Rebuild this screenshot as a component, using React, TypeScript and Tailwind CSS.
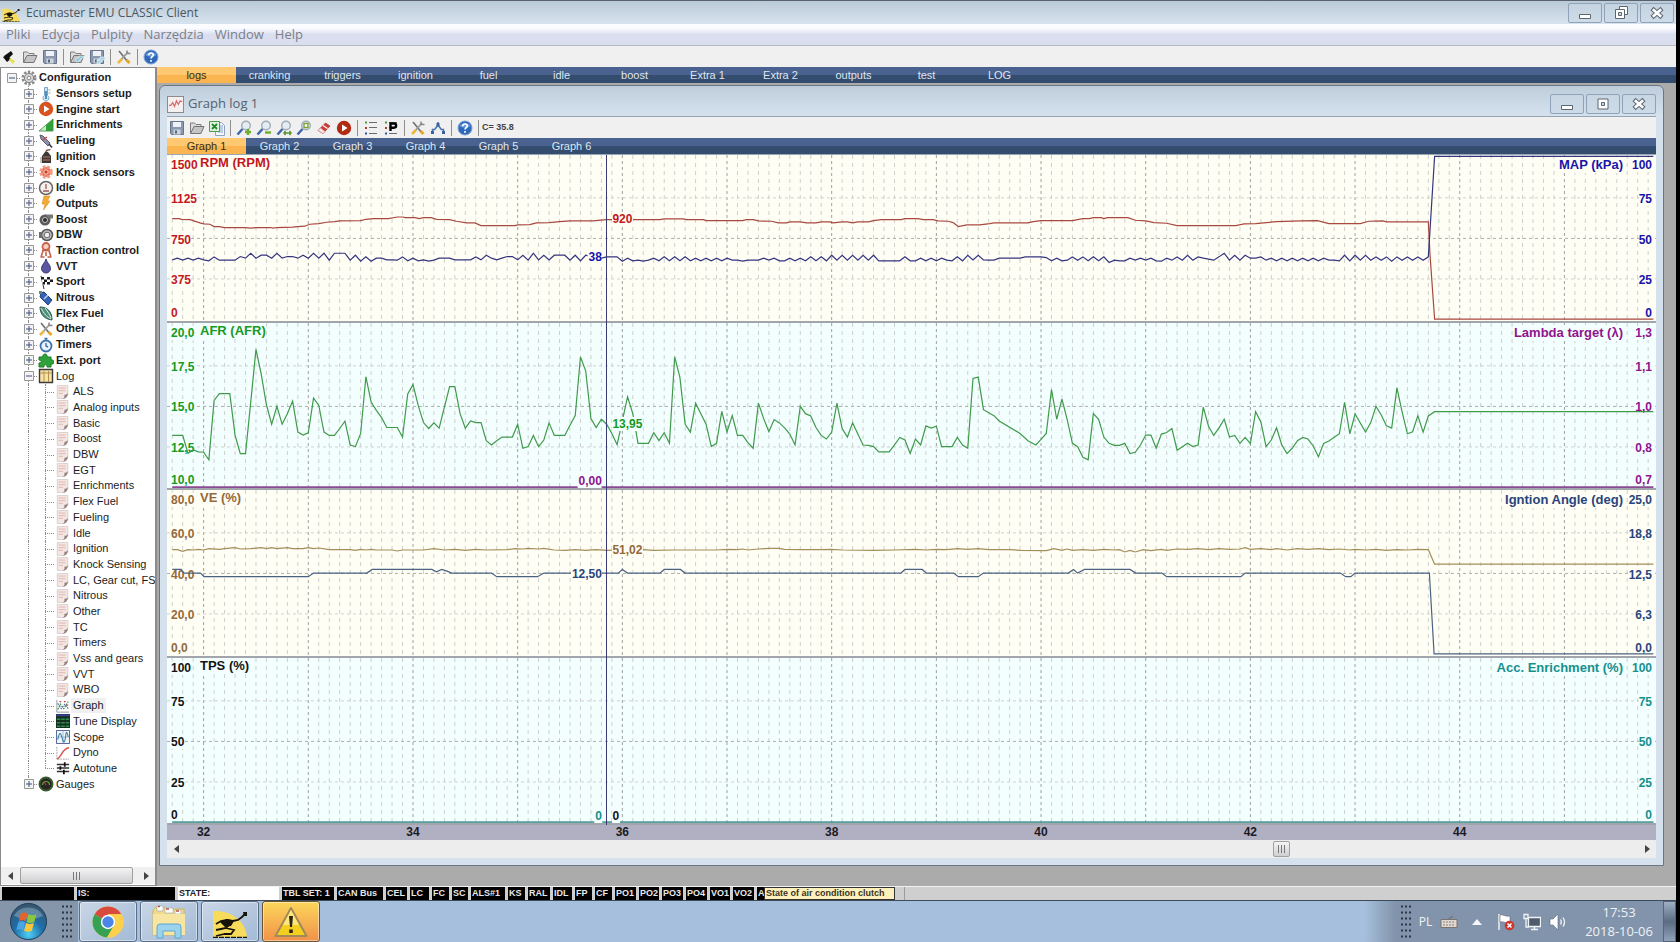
import type { ReactNode } from "react";
import clsx from "clsx";

/* ---------- icons ---------- */

type IconProps = { className?: string; children?: ReactNode };

const Svg = ({ className = "size-4", children }: IconProps) => (
  <svg viewBox="0 0 16 16" className={clsx("shrink-0", className)} fill="none" aria-hidden="true">
    {children}
  </svg>
);

const Runner = ({ className }: IconProps) => (
  <svg viewBox="0 0 36 28" className={clsx("shrink-0", className)} fill="none" aria-hidden="true">
    <path d="M1 1c16-1 32 8 34 26H1z" fill="#f7dc5c" />
    <path d="M1 27.500h34" stroke="#15130a" strokeWidth="1.500" strokeDasharray="5 1" />
    <path d="m4 14 5-3 6-1 6 1 5-1 4-3 3-3M20 12l-6 6-5 1M14 18l8 2-3 4h-7M9 19l-5 1M12 24l-8 2" stroke="#15130a" strokeWidth="1.800" />
    <path d="m8 12 7-3 7 2-3 5-6 1zM31 2h4v4h-3z" fill="#15130a" />
  </svg>
);

const Folder = ({ blue }: { blue?: boolean }) => (
  <Svg>
    <path d="M1.500 13V3h4l1.500 1.500h5V6" fill="#dcdcdc" stroke="#7d7d7d" />
    <path d="M1.500 13.500 5 6.500h10l-3 7z" fill="#c4c4c4" stroke="#757575" />
    {blue && <path d="M7 13V9h3V7h5v2h-3v2h-2v2z" fill="#8fc6dd" stroke="#fff" strokeWidth=".5" />}
  </Svg>
);

const Floppy = ({ blue }: { blue?: boolean }) => (
  <Svg>
    <path d="M1.500 1.500h13v13h-12l-1-1z" fill="#8a98b0" stroke="#66758e" />
    <path d="M4 2h8v5H4z" fill="#eef1f5" />
    <path d="M4.500 9.500h7v5h-7z" fill="#cfd5de" />
    <path d="M6 10.500h2v3H6z" fill="#56647c" />
    {blue && <path d="M8 15v-4h3V8h5v3h-3v2h-2v2z" fill="#9fd3e6" stroke="#fff" strokeWidth=".6" />}
  </Svg>
);

const Flashlight = () => (
  <Svg>
    <path d="m2 7 7-5 2 3-6 6z" fill="#111" />
    <path d="m1 8 4-2 4 4-4 3z" fill="#111" />
    <path d="m8 9 5 3-2 3-4-4z" fill="#e8e04e" />
  </Svg>
);

const Tools = () => (
  <Svg>
    <path d="m3 2 9 11" stroke="#6f6f6f" strokeWidth="1.600" />
    <path d="m10.500 11 3 3" stroke="#e6a928" strokeWidth="3" />
    <path d="M12 3 4 12" stroke="#9b9b9b" strokeWidth="1.800" />
    <path d="m6 10-4 4" stroke="#edb83b" strokeWidth="2.600" />
    <path d="M11 1.500v3h3.500" stroke="#8a8a8a" strokeWidth="1.500" />
  </Svg>
);

const Help = () => (
  <Svg>
    <circle cx="8" cy="8" r="7" fill="#2f68b8" stroke="#7ba1d6" />
    <path d="M2.500 6a6 4.500 0 0 1 11 0c-3 2-8 2-11 0" fill="#6c9bdb" />
    <path d="M5.800 6.200c0-3 4.500-2.800 4.500-.2 0 1.600-2.200 1.500-2.200 3.400M8 11v1.700" stroke="#fff" strokeWidth="1.700" />
  </Svg>
);

const Excel = () => (
  <Svg>
    <path d="M6.500 2.500h6l3 3v10h-9z" fill="#f5f8fb" stroke="#8fa3bd" />
    <path d="M9 6h5M9 8h5M9 10h5M9 12h5" stroke="#7fa7cf" />
    <path d="M.5 1.500h10v10H.5z" fill="#e2f2df" stroke="#4d9a4b" />
    <path d="m3 4 5 5M8 4 3 9" stroke="#1f8a2b" strokeWidth="1.800" />
  </Svg>
);

const Magnifier = ({ mark }: { mark: string }) => (
  <Svg>
    <circle cx="10" cy="5.500" r="4.300" fill="#e4edf3" stroke="#a0adb8" strokeWidth="1.400" />
    <path d="m6.500 9-5 5.500" stroke="#3d64a8" strokeWidth="2.400" />
    {mark === "in" && <path d="M12 9v6M9 12h6" stroke="#6fae2a" strokeWidth="2.400" />}
    {mark === "out" && <path d="M9 12.500h6" stroke="#6fae2a" strokeWidth="2.400" />}
    {mark === "fit" && <path d="M8 13h7M9.500 11 8 13l1.500 2M13.500 11l1.500 2-1.500 2" stroke="#5a8f30" strokeWidth="1.400" />}
    {mark === "box" && <path d="M8 3.500h4v4H8z" fill="#fff" stroke="#7fa33a" strokeWidth="1.400" />}
  </Svg>
);

const Eraser = () => (
  <Svg>
    <path d="M2 10.500 9.500 3l4.500 3-7 7.500z" fill="#cf3a36" stroke="#9d2320" strokeWidth=".6" />
    <path d="m2 10.500 2.500-2.500 4.500 3.400L7 13.500z" fill="#f6e6e4" stroke="#c99" strokeWidth=".5" />
    <path d="m7 5.500 4.500 3" stroke="#fff" strokeWidth="1.400" />
  </Svg>
);

const Play = ({ color = "#b32a12" }: { color?: string }) => (
  <Svg>
    <circle cx="8" cy="8" r="7.200" fill={color} />
    <path d="M6 4.500 11.500 8 6 11.500z" fill="#fff" />
  </Svg>
);

const ListIcon = ({ p }: { p?: boolean }) => (
  <Svg>
    <path d="M2 2.500h2" stroke="#4f9a3d" strokeWidth="2" />
    <path d="M2 8h2" stroke="#b03a3a" strokeWidth="2" />
    <path d="M2 13.500h2" stroke="#3a4fa8" strokeWidth="2" />
    <path d="M6 2.500h8M6 7.500h8M6 13.500h8" stroke="#6b6b6b" />
    {p && <path d="M7.500 11V3.500H11a2 2 0 0 1 0 4.200H8" stroke="#000" strokeWidth="2.400" />}
  </Svg>
);

const Compass = () => (
  <Svg>
    <path d="M2.500 14V9.500h2.200L8 5l3.300 4.500h2.200V14M8 5V2" stroke="#4672b0" strokeWidth="1.500" />
    <path d="M6.500 3h3v3h-3zM1 11h3v3H1zM12 11h3v3h-3z" fill="#3a62a0" />
  </Svg>
);

const Page = () => (
  <Svg className="size-[14px]">
    <path d="M1.500.5h12v11l-3.500 4H1.500z" fill="#f3e7e4" stroke="#d6cbc8" />
    <path d="M3 3.500h8M3 6.500h8M3 9.500h5" stroke="#dfb0ab" />
    <path d="M13.500 9c0 4-2 6.500-6 6.500 2-1 2.500-2 2-4.500 1.500.5 3-.5 4-2z" fill="#94817f" />
  </Svg>
);

const GraphIcon = () => (
  <Svg className="size-[14px]">
    <path d="M1 1v14h14" stroke="#8b8b9b" />
    <path d="m2 12 3-6 4 5 5-8" stroke="#3f9a4c" strokeWidth="1.400" strokeDasharray="2 1" />
    <path d="m2 5 4 6 4-5 4 5" stroke="#4860a8" strokeWidth="1.200" strokeDasharray="2 1" />
    <path d="M4 3h2M9 3h2M12 7h2" stroke="#d03c3c" strokeWidth="1.500" />
  </Svg>
);

const TuneIcon = () => (
  <Svg className="size-[14px]">
    <path d="M0 0h16v16H0z" fill="#14301f" />
    <path d="M0 1.500h16" stroke="#3f3f9c" strokeWidth="2" />
    <path d="M1 6h14M1 10h14M1 14h14" stroke="#2f8a4c" strokeWidth="1.600" strokeDasharray="4 1" />
  </Svg>
);

const ScopeIcon = () => (
  <Svg className="size-[14px]">
    <path d="M.5.5h15v15H.5z" fill="#f2f6fb" stroke="#3d4b86" />
    <path d="M8 1v14M1 8h14" stroke="#9fb2cc" />
    <path d="M2 11c2-9 3-9 5-2s3 6 4-2 2-3 3 1" stroke="#2f7fa3" strokeWidth="1.200" />
  </Svg>
);

const DynoIcon = () => (
  <Svg className="size-[14px]">
    <path d="M1 1v14h14" stroke="#999" strokeDasharray="2 1" />
    <path d="M1 15C7 13 6 3 15 2" stroke="#d9534a" strokeWidth="1.600" />
  </Svg>
);

const Sliders = () => (
  <Svg className="size-[14px]">
    <path d="M1 4h14M1 8h14M1 12h14" stroke="#333" strokeWidth="1.500" />
    <path d="M10 1.500v5M5 6v4M9 10v5" stroke="#111" strokeWidth="2" />
  </Svg>
);

const treeIcons: Record<string, ReactNode> = {
  gear: (
    <Svg>
      <circle cx="8" cy="8" r="6.200" stroke="#8b8b8b" strokeWidth="2.600" strokeDasharray="2.400 1.500" />
      <circle cx="8" cy="8" r="4.600" fill="#d6d6d6" stroke="#7f7f7f" />
      <circle cx="8" cy="8" r="1.800" fill="#fff" stroke="#888" />
    </Svg>
  ),
  thermo: (
    <Svg>
      <path d="M6.500 1.500h3v8a3 3 0 1 1-3 0z" fill="#cfe5f3" stroke="#7aa6c4" />
      <path d="M8 5v8" stroke="#3e86bf" strokeWidth="1.800" />
      <path d="M10.500 4h2M10.500 7h2" stroke="#8aa" />
    </Svg>
  ),
  start: <Play color="#d9531e" />,
  ramp: (
    <Svg>
      <path d="M1 14 15 2v12z" fill="#c9ecc9" stroke="#5a9a5a" />
      <path d="M8 8.500 15 2v12H8z" fill="#2fa03a" />
    </Svg>
  ),
  injector: (
    <Svg>
      <path d="m2 2 3 1 7 7-2 3-7-7z" fill="#8f8fa6" stroke="#5a5a72" />
      <path d="m5 7 4-3" stroke="#c44" strokeWidth="1.500" />
      <path d="m11 11 3 3.500" stroke="#444" strokeWidth="1.800" />
    </Svg>
  ),
  coil: (
    <Svg>
      <path d="M4 15V8l3-4h3l3 4v7z" fill="#3e3734" />
      <path d="M5 9h7M5 12h7" stroke="#b9776a" />
      <path d="M8 4c0-3 4-1 4-3" stroke="#7a5a50" strokeWidth="1.500" />
      <path d="M2 9h2v6H2z" fill="#c9c4c0" />
    </Svg>
  ),
  knock: (
    <Svg>
      <circle cx="8" cy="8" r="5" fill="#e8664a" stroke="#f09a80" strokeWidth="3.500" strokeDasharray="2.500 1.500" />
      <circle cx="8" cy="8" r="2.200" stroke="#ffd9cc" fill="#c83e2c" />
    </Svg>
  ),
  dial: (
    <Svg>
      <circle cx="8" cy="8" r="6.500" fill="#f3f0ef" stroke="#6b6666" strokeWidth="1.500" />
      <path d="M8 4v5M5 11h6" stroke="#9a5a5a" strokeWidth="1.300" />
    </Svg>
  ),
  bolt: (
    <Svg>
      <path d="M6 1h6L9.500 6H12l-6.500 9L7 9H4z" fill="#f2ac32" stroke="#d98f2a" strokeWidth=".6" />
    </Svg>
  ),
  turbo: (
    <Svg>
      <circle cx="7" cy="9" r="5.500" fill="#5b5b5b" />
      <path d="M7 3.500h8v4h-4z" fill="#777" />
      <circle cx="7" cy="9" r="2.500" fill="#2c2c2c" stroke="#c5c5c5" />
    </Svg>
  ),
  throttle: (
    <Svg>
      <circle cx="9" cy="8" r="5.500" fill="#bdbdbd" stroke="#555" strokeWidth="1.500" />
      <circle cx="9" cy="8" r="2.800" fill="#efefef" stroke="#666" />
      <path d="M1 5h3v6H1z" fill="#6d6d6d" />
    </Svg>
  ),
  traction: (
    <Svg>
      <circle cx="8" cy="4.500" r="3.500" stroke="#c8614b" strokeWidth="1.800" fill="#f3cfc4" />
      <path d="M4 8c3 1 5 1 8 0M5 9l-2 6M11 9l2 6M8 10v4M2.500 15h4M9.500 15h4" stroke="#c8614b" strokeWidth="1.600" />
    </Svg>
  ),
  drop: (
    <Svg>
      <path d="M8 1c1 4 4.500 6 4.500 9.500a4.500 4.500 0 0 1-9 0C3.500 7 7 5 8 1z" fill="#5a56a0" stroke="#3c3a78" />
    </Svg>
  ),
  flag: (
    <Svg>
      <path d="m3 2 3 13" stroke="#333" />
      <path d="M3 3h11v8H5z" fill="#fff" />
      <path d="M3 3h3v2.500H3zM9 3h3v2.500H9zM6 5.500h3V8H6zM12 5.500h3V8h-3zM5 8h2v2.500H5zM9 8h3v2.500H9z" fill="#1c1c1c" />
    </Svg>
  ),
  bottle: (
    <Svg>
      <path d="m3 3 3-1 8 8-4 5-8-8z" fill="#3563b3" stroke="#23407a" />
      <path d="m6 9 4-4" stroke="#b9cdf0" strokeWidth="1.600" />
      <path d="M1 1h3v3H1z" fill="#5c8a7a" />
    </Svg>
  ),
  leaf: (
    <Svg>
      <path d="M2 2c7 0 12 4 12 13C6 14 2 9 2 2z" fill="#4f8f7c" stroke="#2c5a4e" />
      <path d="M3 3c3 6 6 9 10 11M7 3c3 4 5 7 6 10" stroke="#d7ece4" />
    </Svg>
  ),
  tools: <Tools />,
  timer: (
    <Svg>
      <circle cx="8" cy="9" r="5.500" fill="#eaf3fb" stroke="#3f72ad" strokeWidth="1.800" />
      <path d="M6.500 1.500h3M8 2v2M8 6v3l2 1" stroke="#3f72ad" strokeWidth="1.400" />
    </Svg>
  ),
  puzzle: (
    <Svg>
      <path d="M1 5h4c-1-4 5-4 4 0h4v3c4-1 4 5 0 4v3H9c1-3-4-3-3 0H1v-4c3 0 3-3 0-3z" fill="#2fa23a" stroke="#1d7a28" />
    </Svg>
  ),
  table: (
    <Svg>
      <path d="M1.500 1.500h13v13h-13z" fill="#f8e3a3" stroke="#3b3b3b" strokeWidth="1.400" />
      <path d="M6 3v11M10.500 3v11M2 5h12" stroke="#b08f55" />
    </Svg>
  ),
  gauge: (
    <Svg>
      <circle cx="8" cy="8" r="6.500" fill="#2c2424" stroke="#385a30" strokeWidth="2" />
      <path d="M4.500 9a3.500 3.500 0 0 1 7 0" stroke="#4fae3d" strokeWidth="1.200" />
      <path d="M8 9 6 6" stroke="#c44" />
    </Svg>
  ),
  page: <Page />,
  graph: <GraphIcon />,
  tune: <TuneIcon />,
  scope: <ScopeIcon />,
  dyno: <DynoIcon />,
  sliders: <Sliders />,
};

/* ---------- tree ---------- */

type TreeItem = { label: string; icon: string; level: 0 | 1 | 2; mark?: "+" | "-"; selected?: boolean };

const sections: [string, string][] = [
  ["Sensors setup", "thermo"],
  ["Engine start", "start"],
  ["Enrichments", "ramp"],
  ["Fueling", "injector"],
  ["Ignition", "coil"],
  ["Knock sensors", "knock"],
  ["Idle", "dial"],
  ["Outputs", "bolt"],
  ["Boost", "turbo"],
  ["DBW", "throttle"],
  ["Traction control", "traction"],
  ["VVT", "drop"],
  ["Sport", "flag"],
  ["Nitrous", "bottle"],
  ["Flex Fuel", "leaf"],
  ["Other", "tools"],
  ["Timers", "timer"],
  ["Ext. port", "puzzle"],
];

const logPages = [
  "ALS", "Analog inputs", "Basic", "Boost", "DBW", "EGT", "Enrichments", "Flex Fuel", "Fueling", "Idle",
  "Ignition", "Knock Sensing", "LC, Gear cut, FS", "Nitrous", "Other", "TC", "Timers", "Vss and gears", "VVT", "WBO",
];

const tree: TreeItem[] = [
  { label: "Configuration", icon: "gear", level: 0, mark: "-" },
  ...sections.map(([label, icon]): TreeItem => ({ label, icon, level: 1, mark: "+" })),
  { label: "Log", icon: "table", level: 1, mark: "-" },
  ...logPages.map((label): TreeItem => ({ label, icon: "page", level: 2 })),
  { label: "Graph", icon: "graph", level: 2, selected: true },
  { label: "Tune Display", icon: "tune", level: 2 },
  { label: "Scope", icon: "scope", level: 2 },
  { label: "Dyno", icon: "dyno", level: 2 },
  { label: "Autotune", icon: "sliders", level: 2 },
  { label: "Gauges", icon: "gauge", level: 1, mark: "+" },
];

const TreeCell = ({ line, stub, mark }: { line?: "full" | "half"; stub?: boolean; mark?: "+" | "-" }) => (
  <span className="relative flex h-full w-[17px] shrink-0 items-center justify-center">
    {line && (
      <span
        className={clsx("absolute left-2 top-0 border-l border-dotted border-[#8c8c8c]", line === "full" ? "h-full" : "h-1/2")}
      />
    )}
    {stub && <span className="absolute left-2 top-1/2 w-[9px] border-t border-dotted border-[#8c8c8c]" />}
    {mark && (
      <svg viewBox="0 0 10 10" className="relative size-[10px]" aria-hidden="true">
        <path d="M.5.5h9v9h-9z" fill="#f4f4f4" stroke="#989898" />
        <path d={mark === "+" ? "M2 5h6M5 2v6" : "M2 5h6"} stroke="#3f4f80" />
      </svg>
    )}
  </span>
);

const TreeRow = ({ item, last }: { item: TreeItem; last: boolean }) => {
  const bold = item.level < 2 && item.label !== "Log" && item.label !== "Gauges";
  return (
    <li className="flex min-h-0 items-center whitespace-nowrap pl-[2px]">
      {item.level === 0 && <TreeCell stub mark={item.mark} />}
      {item.level === 1 && (
        <>
          <TreeCell />
          <TreeCell line={item.label === "Gauges" ? "half" : "full"} stub mark={item.mark} />
        </>
      )}
      {item.level === 2 && (
        <>
          <TreeCell />
          <TreeCell line="full" />
          <TreeCell line={last ? "half" : "full"} stub />
        </>
      )}
      <span className="flex w-[17px] shrink-0 items-center justify-center">
        <span className="flex size-[14px] items-center justify-center">{treeIcons[item.icon]}</span>
      </span>
      <span className={clsx("px-[2px] leading-[15px]", bold && "font-bold", item.selected && "bg-[#f0f0f0]")}>
        {item.label}
      </span>
    </li>
  );
};

/* ---------- shared chrome ---------- */

const Separator = () => <span className="mx-[3px] h-4 w-px bg-[#8f8f8f]" />;

const ToolButton = ({ label, children }: { label: string; children: ReactNode }) => (
  <button type="button" aria-label={label} className="flex size-5 items-center justify-center">
    {children}
  </button>
);

const TabStrip = ({ tabs }: { tabs: string[] }) => (
  <nav className="flex h-4 shrink-0 bg-linear-to-b from-[#49628f] from-50% to-[#344c6e] to-50% text-[11px] leading-4 text-[#dfe6f0]">
    {tabs.map((tab, i) => (
      <button
        key={tab}
        type="button"
        className={
          i === 0
            ? "-mr-[3px] w-[79px] bg-linear-to-b from-[#ffc871] from-50% to-[#fbb550] to-50% text-[#3b2c12]"
            : "w-[73px]"
        }
      >
        {tab}
      </button>
    ))}
  </nav>
);

const WindowButtons = ({ restore }: { restore?: boolean }) => {
  const style = "flex h-5 w-[34px] items-center justify-center rounded-[2px] border border-[#8fa2b9] bg-[#c9d7e4]/60";
  return (
    <div className="flex gap-[2px]">
      <button type="button" aria-label="Minimize" className={style}>
        <Svg>
          <path d="M2.500 9.500h11v4h-11z" fill="#fff" stroke="#5c6670" />
        </Svg>
      </button>
      <button type="button" aria-label="Maximize" className={style}>
        <Svg>
          {restore && <path d="M6.500 1.500h8v8h-8z" fill="#fff" stroke="#5c6670" />}
          <path d={restore ? "M2.500 4.500h9v9h-9z" : "M3 3h10v10H3z"} fill="#fff" stroke="#5c6670" />
          <path d={restore ? "M5.500 7.500h3v3h-3z" : "M6.500 6.500h3v3h-3z"} fill="#c9d7e4" stroke="#5c6670" />
        </Svg>
      </button>
      <button type="button" aria-label="Close" className={style}>
        <Svg>
          <path d="m3 3.500 10 9M13 3.500l-10 9" stroke="#5c6670" strokeWidth="4.500" />
          <path d="m3.800 4.200 8.400 7.600M12.200 4.200l-8.400 7.600" stroke="#fff" strokeWidth="2.600" />
        </Svg>
      </button>
    </div>
  );
};

const Arrow = ({ dir, label }: { dir: "left" | "right"; label: string }) => (
  <button type="button" aria-label={label} className="flex h-full w-[18px] shrink-0 items-center justify-center">
    <svg viewBox="0 0 5 8" className="h-2 w-[5px]" aria-hidden="true">
      <path d={dir === "left" ? "M5 0v8L0 4z" : "M0 0v8l5-4z"} fill="#444" />
    </svg>
  </button>
);

const Thumb = ({ className }: { className: string }) => (
  <div
    className={clsx(
      "flex h-full items-center justify-center gap-[2px] rounded-[2px] border border-[#a0a0a0] bg-linear-to-b from-[#f4f4f4] to-[#cfcfd2]",
      className
    )}
  >
    <span className="h-2 w-px bg-[#777]" />
    <span className="h-2 w-px bg-[#777]" />
    <span className="h-2 w-px bg-[#777]" />
  </div>
);

/* ---------- graph ---------- */

// x is the sample number (20 samples per second), y grows downwards, each strip is 502 units high
const FIRST = -1;
const SPAN = 284.5;
const CURSOR = 82.9;

const toPercent = (sample: number) => `${((sample - FIRST) / SPAN) * 100}%`;

const rpm =
  "0,193 1.3,193 1.8,195 3.4,196 5.3,206 6,209 7.2,210 8,217 9,217 10,220 14,220 15,222 16,220 18.7,220 19.3,222 20,220 23,219 24,217 25.3,216 26.3,210 28,208 29.5,204 31,202 32,200 36,199 37,195 38.4,193 41.3,193 43,188 44,188 44.5,190 46.4,190 47.2,193 48,190 49.5,190 50.5,195 53,196 54.3,201 56.2,206 57.8,206 59,214 65.5,214 66,212 68.3,211 69.6,206 72,205 74,202 76,200 80.4,200 82.4,197 83,196 93.2,196 94,194 97.6,194 98.3,196 101.5,196 102,199 109,199 109.7,196 111,196 112,200 114.5,201 115.8,206 117.4,206 118,203 120,203 121.2,206 123,206 124,203 125.6,203 126.3,206 128,203 129,203 130,206 131,203 133,203 134,199 135.5,196 139.3,196 140,193 142.5,193 143.5,196 145.4,196 146.3,200 148.3,201 149.2,205 150.2,217 151.8,212 154.3,212 156.2,208 157,206 163.5,206 164.5,202 166,199 172,199 174,193 175.2,193 176,190 177.5,190 178,193 178.7,190 182.6,190 184,198 186,200 187.6,205 190,207 192,214 203.2,214 204.8,209 207,208 211,202 215.7,200 218.8,199 221,208 227,208 228.6,201 231.3,200 232,203 240,203 240.3,298 241.2,498 283,498";

const mapSamples = [
  360, 355, 361, 355, 361, 355, 360, 363, 351, 361, 361, 361, 361, 350, 355, 340, 355, 346, 346, 355, 340, 355, 350, 350,
  355, 346, 355, 340, 355, 340, 361, 340, 340, 340, 361, 346, 364, 351, 364, 355, 355, 360, 360, 361, 351, 363, 355, 363,
  360, 364, 361, 355, 355, 355, 360, 360, 360, 360, 351, 360, 346, 355, 360, 355, 350, 350, 360, 346, 361, 340, 360, 346,
  360, 346, 346, 346, 361, 346, 363, 346, 350, 350, 355, 351, 351, 351, 364, 355, 363, 361, 364, 361, 355, 363, 351, 363,
  351, 363, 351, 363, 355, 363, 355, 363, 355, 363, 355, 361, 361, 364, 361, 361, 361, 355, 361, 355, 363, 363, 355, 363,
  355, 363, 351, 363, 351, 363, 346, 361, 346, 361, 346, 361, 346, 361, 346, 363, 363, 363, 363, 363, 351, 363, 363, 355,
  363, 355, 363, 355, 361, 363, 351, 363, 346, 360, 346, 360, 361, 361, 355, 355, 355, 355, 355, 351, 351, 351, 351, 353,
  363, 355, 363, 361, 351, 361, 351, 363, 351, 363, 351, 368, 361, 363, 363, 355, 361, 355, 361, 355, 363, 364, 355, 361,
  351, 361, 346, 361, 351, 355, 358, 361, 351, 340, 361, 346, 361, 346, 355, 355, 351, 361, 355, 363, 355, 363, 355, 363,
  355, 363, 355, 363, 355, 361, 361, 363, 346, 363, 346, 361, 346, 361, 351, 361, 351, 364, 351, 361, 351, 361, 351, 361,
  351,
];
const map = `${mapSamples.map((y, i) => `${i},${y - 42}`).join(" ")} 241.2,4 283,4`;

const afr =
  "0,341 2,341 3,395 4,385 5,391 6,392 7,415 8,235 9,214 11,214 12,340 13,396 14,396 15,240 16,80 17,155 18,248 19,307 20,253 21,307 22,275 23,237 24,331 25,340 26,333 27,228 28,250 29,331 30,341 31,341 32,320 33,298 34,370 35,375 36,335 37,163 38,240 39,265 40,287 41,317 43,317 44,346 45,215 46,187 47,250 48,302 49,320 50,303 51,319 52,255 53,193 54,193 55,275 56,319 57,297 58,302 59,302 60,357 61,370 62,357 63,346 65,346 66,307 67,380 68,375 69,341 70,375 71,355 72,303 73,341 75,341 76,310 77,281 78,103 79,145 80,290 81,317 82,292 83,307 84,335 85,369 87,224 88,275 89,365 91,365 92,333 93,357 94,333 95,365 96,103 97,165 98,307 99,331 100,243 101,275 102,307 103,375 104,365 105,268 106,330 107,281 108,341 109,341 110,363 111,380 112,243 113,290 114,330 115,293 116,303 117,318 118,337 119,370 120,253 121,275 122,282 123,317 124,341 125,352 126,331 127,243 128,320 129,346 130,303 131,337 132,370 133,371 134,375 135,391 137,391 138,370 139,347 140,355 141,396 142,352 143,370 144,312 145,319 146,313 147,375 149,375 150,347 151,370 152,380 153,168 154,164 155,263 157,281 158,297 162,335 163.5,357 165,370 166,353 167,335 168,202 169,292 170,231 171,293 172,365 173,375 174,407 175,415 176,275 177,292 178,346 179,365 180,371 181,371 182,365 183,396 184,392 185,370 186,340 187,340 188,380 189,337 190,332 191,320 192,386 194,365 195,375 196,370 197,255 198,313 199,341 200,318 201,292 202,346 203,341 204,365 205,347 206,366 207,269 208,300 209,375 210,355 211,318 212,370 213,396 214,380 215,357 216,347 217,352 218,373 219,406 220,365 221,358 223,336 224,241 225,336 226,276 228,331 229,302 230,253 231,279 232,312 233,319 234,197 235,270 236,336 237,330 238,281 239,331 240,282 241.2,269 283,269";

const ve =
  "0,181 1,181 2,186 3,181 4,182 5,180 6,182 7,178 9,180 10,178 12,175 13,179 15,178 17,175 18,178 19,175 20,178 22,175 23,178 25,178 26,175 27,178 28,176 30,181 34,181 35,183 36,180 37,182 38,180 39,182 42,182 43,185 44,182 48,182 50,178 52,182 54,180 56,183 58,180 60,182 64,181 65.5,178 67,179 68,177 70,179 71,177 73,182 75,183 77,181 79,183 81,181 83,183 86,182 88,183 90,181 92,183 96,182 104,182 106,180 108,181 109,179 110,182 112,179 114,177 116,177 117,180 120,181 124,181 126,180 128,182 134,183 138,182 142,180 144,182 146,180 148,181 150,178 152,180 154,178 156,181 160,181 162,183 167,184 168.5,178 170,183 171,179 172,183 174,181 176,183 178,180 180,182 181,181 182,188 183,183 184,188 185.5,181 187,184 189,180 190,183 192,179 194,180 196,178 198,181 200,178 202,180 204,179 205,175 206,180 208,178 210,181 211,178 213,182 215,178 217,180 219,178 221,181 223,179 225,182 226,180 228,182 230,180 232,183 234,181 236,182 238,180 240,181 241.2,225 283,225";

const angle =
  "0,241 1.7,241 2.2,252 5.4,252 6.1,263 26,263 27,252 37.2,252 38.2,241 49.6,241 50.5,248 51.5,241 52.5,246 53.4,252 61,252 62,263 69.8,263 71,252 85.2,252 86,241 87,252 93.2,252 94,241 97.1,241 98,252 139.2,252 140,241 143.3,241 144.1,252 149.3,252 150.2,263 154,263 155,252 171.2,252 172.2,241 173,252 174.3,241 183,241 184.1,252 189.1,252 190,263 204.2,263 205,252 223.2,252 224.2,263 225.2,263 226,252 240.2,252 241.1,497 283,497";

type Axis = { title: string; text: string; ticks: string[]; stroke: string; points: string; width?: number; value: string };

type Strip = { bg: string; left: Axis; right: Axis; leftValue: string; rightValue: string };

const strips: Strip[] = [
  {
    bg: "bg-[#fffef5]",
    left: { title: "RPM (RPM)", text: "text-[#c4181e]", ticks: ["1500", "1125", "750", "375", "0"], stroke: "#a8483f", points: rpm, value: "920" },
    right: { title: "MAP (kPa)", text: "text-[#1814ac]", ticks: ["100", "75", "50", "25", "0"], stroke: "#34357f", points: map, value: "38" },
    leftValue: "top-[57px]",
    rightValue: "top-[95px]",
  },
  {
    bg: "bg-[#f3feff]",
    left: { title: "AFR (AFR)", text: "text-[#169a22]", ticks: ["20,0", "17,5", "15,0", "12,5", "10,0"], stroke: "#3f9a4a", points: afr, value: "13,95" },
    right: { title: "Lambda target (λ)", text: "text-[#90148c]", ticks: ["1,3", "1,1", "1,0", "0,8", "0,7"], stroke: "#8a4a94", points: "0,498 283,498", width: 2, value: "0,00" },
    leftValue: "top-[94px]",
    rightValue: "top-[151px]",
  },
  {
    bg: "bg-[#fffef5]",
    left: { title: "VE (%)", text: "text-[#94683a]", ticks: ["80,0", "60,0", "40,0", "20,0", "0,0"], stroke: "#a38d58", points: ve, value: "51,02" },
    right: { title: "Igntion Angle (deg)", text: "text-[#27457c]", ticks: ["25,0", "18,8", "12,5", "6,3", "0,0"], stroke: "#4a6282", points: angle, value: "12,50" },
    leftValue: "top-[53px]",
    rightValue: "top-[77px]",
  },
  {
    bg: "bg-[#f3feff]",
    left: { title: "TPS (%)", text: "text-[#141414]", ticks: ["100", "75", "50", "25", "0"], stroke: "#4f9a9a", points: "0,498 283,498", value: "0" },
    right: { title: "Acc. Enrichment (%)", text: "text-[#16908d]", ticks: ["100", "75", "50", "25", "0"], stroke: "#4f9a9a", points: "0,498 283,498", value: "0" },
    leftValue: "top-[151px]",
    rightValue: "top-[151px]",
  },
];

const minorLines = Array.from({ length: 142 }, (_, i) => i * 2);

const GridLines = () => (
  <svg
    viewBox={`${FIRST} 0 ${SPAN} 502`}
    preserveAspectRatio="none"
    className="absolute inset-0 size-full"
    fill="none"
    aria-hidden="true"
  >
    {minorLines.map((x) => {
      const major = (x - 6) % 20 === 0;
      return (
        <path
          key={x}
          d={`M${x} 0V502`}
          stroke={major ? "#a0a0a0" : "#cdd0cc"}
          strokeDasharray={major ? "3 3" : "4 4"}
          vectorEffect="non-scaling-stroke"
        />
      );
    })}
    {[130, 253, 376].map((y) => (
      <path
        key={y}
        d={`M-1 ${y}H283.5`}
        stroke={y === 253 ? "#adadad" : "#cfd2ce"}
        strokeDasharray="3 3"
        vectorEffect="non-scaling-stroke"
      />
    ))}
  </svg>
);

const Ticks = ({ axis, bg, align }: { axis: Axis; bg: string; align: string }) => (
  <div className={clsx("relative flex w-[29px] shrink-0 flex-col text-[12px] leading-[14px]", align)}>
    {axis.ticks.map((tick, i) => (
      <div
        key={tick}
        className={clsx("flex items-center", i === 0 && "h-6 pb-1", i === 4 && "h-5 pt-1", i > 0 && i < 4 && "flex-1")}
      >
        <span className={bg}>{tick}</span>
      </div>
    ))}
  </div>
);

const GraphStrip = ({ strip }: { strip: Strip }) => {
  const { left, right, bg } = strip;
  return (
    <section className={clsx("relative flex min-h-0 flex-1 border-b-2 border-[#a2a5ab] px-1 font-bold", bg)}>
      <GridLines />
      <div className={clsx("relative flex flex-1", left.text)}>
        <Ticks axis={left} bg={bg} align="items-start" />
        <h2 className={clsx("h-4 text-[13px] leading-4", bg)}>{left.title}</h2>
      </div>
      <div className={clsx("relative flex", right.text)}>
        <h2 className={clsx("mt-[2px] h-4 text-[13px] leading-4", bg)}>{right.title}</h2>
        <Ticks axis={right} bg={bg} align="items-end" />
      </div>
      <svg
        viewBox={`${FIRST} 0 ${SPAN} 502`}
        preserveAspectRatio="none"
        className="absolute inset-0 size-full"
        fill="none"
        aria-hidden="true"
      >
        {[left, right].map((axis) => (
          <polyline
            key={axis.title}
            points={axis.points}
            stroke={axis.stroke}
            strokeWidth={axis.width ?? 1.2}
            vectorEffect="non-scaling-stroke"
          />
        ))}
      </svg>
      <span
        className={clsx("absolute -translate-x-full pl-px text-[12px] leading-[14px]", bg, right.text, strip.rightValue)}
        style={{ left: toPercent(CURSOR - 0.8) }}
      >
        {right.value}
      </span>
      <span
        className={clsx("absolute pr-px text-[12px] leading-[14px]", bg, left.text, strip.leftValue)}
        style={{ left: toPercent(CURSOR + 1.2) }}
      >
        {left.value}
      </span>
    </section>
  );
};

const GraphWindow = () => (
  <div className="mb-5 ml-[2px] mr-[12px] mt-[2px] flex flex-1 flex-col rounded-t-md border border-[#6b7683] bg-[#d7e3f0] bg-linear-to-b from-[#bfcddb] to-[#d5e2ee] to-[30px] px-[7px] pb-[7px]">
    <div className="flex h-[30px] shrink-0 items-center pt-[6px]">
      <span className="flex size-[17px] items-center justify-center border border-[#8c8c8c] bg-[#f5f0f0]">
        <Svg className="size-[15px]">
          <path d="M1 9h2l2-3 2 4 2-6 2 4 2-4 2 1" stroke="#d66a6a" strokeWidth="1.300" />
        </Svg>
      </span>
      <h1 className="ml-1 flex-1 font-['Open_Sans','Noto_Sans',sans-serif] text-[13px] text-[#56616d]">Graph log 1</h1>
      <WindowButtons />
    </div>
    <div className="flex h-[22px] shrink-0 items-center border-t border-[#97a3b0] bg-[#f0f0f0]">
      <ToolButton label="Save log"><Floppy /></ToolButton>
      <ToolButton label="Open log"><Folder /></ToolButton>
      <ToolButton label="Export to Excel"><Excel /></ToolButton>
      <Separator />
      <ToolButton label="Zoom in"><Magnifier mark="in" /></ToolButton>
      <ToolButton label="Zoom out"><Magnifier mark="out" /></ToolButton>
      <ToolButton label="Zoom to fit"><Magnifier mark="fit" /></ToolButton>
      <ToolButton label="Zoom box"><Magnifier mark="box" /></ToolButton>
      <ToolButton label="Clear"><Eraser /></ToolButton>
      <ToolButton label="Record"><Play /></ToolButton>
      <Separator />
      <ToolButton label="Channels"><ListIcon /></ToolButton>
      <ToolButton label="Parameters"><ListIcon p /></ToolButton>
      <Separator />
      <ToolButton label="Options"><Tools /></ToolButton>
      <ToolButton label="Measure"><Compass /></ToolButton>
      <Separator />
      <ToolButton label="Help"><Help /></ToolButton>
      <Separator />
      <span className="text-[9px] font-bold text-[#444]">C= 35.8</span>
    </div>
    <TabStrip tabs={["Graph 1", "Graph 2", "Graph 3", "Graph 4", "Graph 5", "Graph 6"]} />
    <div className="relative flex flex-1 flex-col border-t border-[#9aa5b5]">
      {strips.map((strip) => (
        <GraphStrip key={strip.left.title} strip={strip} />
      ))}
      <span className="absolute inset-y-0 w-px bg-[#3a3a72]" style={{ left: toPercent(CURSOR) }} />
    </div>
    <div className="relative h-[15px] shrink-0 bg-[#b1b0c2] text-[12px] font-bold leading-[15px] text-[#1b1b1f]">
      {[32, 34, 36, 38, 40, 42, 44].map((second) => (
        <span key={second} className="absolute -translate-x-1/2" style={{ left: toPercent(6 + (second - 32) * 20) }}>
          {second}
        </span>
      ))}
    </div>
    <div className="flex h-[18px] shrink-0 bg-[#ededed] py-px">
      <Arrow dir="left" label="Scroll back" />
      <div className="flex flex-1">
        <span className="grow-[1090]" />
        <Thumb className="w-[17px]" />
        <span className="grow-[348]" />
      </div>
      <Arrow dir="right" label="Scroll forward" />
    </div>
  </div>
);

/* ---------- status bar ---------- */

const statusCells: [string, string][] = [
  ["", "w-[72px]"], ["IS:", "w-[98px]"], ["STATE:", "w-[101px]"], ["TBL SET: 1", "w-[52px]"], ["CAN Bus", "w-[46px]"],
  ["CEL", "w-[21px]"], ["LC", "w-[19px]"], ["FC", "w-[17px]"], ["SC", "w-[16px]"], ["ALS#1", "w-[34px]"],
  ["KS", "w-[17px]"], ["RAL", "w-[22px]"], ["IDL", "w-[19px]"], ["FP", "w-[17px]"], ["CF", "w-[17px]"],
  ["PO1", "w-[21px]"], ["PO2", "w-[20px]"], ["PO3", "w-[21px]"], ["PO4", "w-[21px]"], ["VO1", "w-[20px]"],
  ["VO2", "w-[21px]"], ["A", "w-[7px]"],
];

const StatusBar = () => (
  <div className="flex h-[15px] shrink-0 items-stretch gap-[3px] border-b border-t border-b-[#3d4a5c] border-t-[#f2f2f2] bg-[#cfcfcf] pl-[2px] text-[9px] font-bold leading-[13px]">
    {statusCells.map(([text, width]) => (
      <span
        key={width + text}
        className={clsx(
          "shrink-0 overflow-hidden whitespace-nowrap pl-px",
          width,
          text === "STATE:" ? "bg-white text-[#222]" : "bg-black text-[#e8e8e8]"
        )}
      >
        {text}
      </span>
    ))}
    <span role="tooltip" className="-ml-[3px] w-[131px] border border-[#333] bg-[#fdf0bb] pl-px leading-[11px] text-[#3a3426]">
      State of air condition clutch
    </span>
    <span className="ml-[6px] w-px bg-[#9c9c9c]" />
  </div>
);

/* ---------- taskbar ---------- */

const Grip = () => (
  <svg viewBox="0 0 10 34" className="h-[34px] w-[10px]" aria-hidden="true">
    {[1, 7, 13, 19, 25, 31].map((y) => (
      <path key={y} d={`M0 ${y + 0.5}h2M4 ${y + 0.5}h2M8 ${y + 0.5}h2`} stroke="#2c3745" strokeWidth="2" />
    ))}
  </svg>
);

const StartOrb = () => (
  <svg viewBox="0 0 40 40" className="size-[39px]" aria-hidden="true">
    <defs>
      <radialGradient id="orb" cx=".5" cy=".85" r=".8">
        <stop offset="0" stopColor="#4fd0f5" />
        <stop offset=".5" stopColor="#1f6ea8" />
        <stop offset="1" stopColor="#36566f" />
      </radialGradient>
    </defs>
    <circle cx="20" cy="20" r="18.500" fill="url(#orb)" stroke="#1d3c58" />
    <path d="M5 14a16 13 0 0 1 30 0c-9 5-21 5-30 0" fill="#fff" opacity=".25" />
    <path d="M12 12c3-2 5-1 7 0l-2 8c-2-1-4-2-7 0z" fill="#e8632c" />
    <path d="M20 12.500c3 1.500 5 1.500 8 0l-2 8c-3 1.500-5 1.500-8 0z" fill="#8cc63f" />
    <path d="M9.500 21c3-2 5-1 7 0l-2 8c-2-1-4-2-7 0z" fill="#4aa4e6" />
    <path d="M17.500 21.500c3 1.500 5 1.500 8 0l-2 8c-3 1.500-5 1.500-8 0z" fill="#fbc63b" />
  </svg>
);

const Chrome = () => (
  <svg viewBox="0 0 32 32" className="size-8" aria-hidden="true">
    <circle cx="16" cy="16" r="15.500" fill="#fcd04a" />
    <path d="M16 16 2.600 8.200A15.500 15.500 0 0 1 29.400 8.200H16z" fill="#d84a3d" />
    <path d="M2.600 8.200A15.500 15.500 0 0 0 15 31.500l7-12-6-3.500z" fill="#36a152" />
    <path d="M15 31.500 22.500 19 16 8.200h13.400A15.500 15.500 0 0 1 15 31.500z" fill="#fcd04a" />
    <circle cx="16" cy="16" r="7.200" fill="#fff" />
    <circle cx="16" cy="16" r="5.700" fill="#4a86e8" />
  </svg>
);

const Explorer = () => (
  <svg viewBox="0 0 36 34" className="h-[34px] w-9" aria-hidden="true">
    <path d="M2 5 5 2h8l2 2h18v26H2z" fill="#f0d98a" stroke="#d2b45c" />
    <path d="M6 1h6v5H6zM14 3h8v5h-8zM24 5h6v4h-6z" fill="#fff" stroke="#9aa" strokeWidth=".6" />
    <path d="M7 1.500h2M15 4h3M25 6h3" stroke="#c0504a" strokeWidth="1.600" />
    <path d="M2 9h32v21H2z" fill="#f7e5a2" />
    <path d="M6 33V22q0-3 3-3h18q3 0 3 3v11h-6v-7H12v7z" fill="#9bd3ee" stroke="#5fa8cf" />
  </svg>
);

const Warning = () => (
  <svg viewBox="0 0 34 32" className="h-8 w-[34px]" aria-hidden="true">
    <path d="M17 2 32.500 30h-31z" fill="#f5cf1d" stroke="#a08a5a" strokeWidth="2" strokeLinejoin="round" />
    <path d="M17 4 25 19H9z" fill="#fbe680" />
    <path d="M15 10h4l-1 11h-2zM15.200 23.500h3.600v3.500h-3.600z" fill="#2b2410" />
  </svg>
);

const TaskButton = ({ label, hot, children }: { label: string; hot?: boolean; children: ReactNode }) => (
  <button
    type="button"
    aria-label={label}
    className={clsx(
      "flex h-full w-[58px] items-center justify-center rounded-[3px] border shadow-[inset_0_0_0_1px_rgba(255,255,255,0.45)]",
      hot
        ? "border-[#6b5530] bg-linear-to-b from-[#fbd65a] to-[#f0914a]"
        : "border-[#5b6d85] bg-linear-to-br from-[#c9d6e6] to-[#a4bad6]"
    )}
  >
    {children}
  </button>
);

const Taskbar = () => (
  <footer className="flex h-[41px] shrink-0 items-stretch bg-[#a6bfdc] font-['Open_Sans','Noto_Sans',sans-serif]">
    <div className="flex w-[78px] items-center bg-[#8595aa] pl-[9px]">
      <button type="button" aria-label="Start">
        <StartOrb />
      </button>
      <span className="ml-[14px]">
        <Grip />
      </span>
    </div>
    <div className="flex flex-1 gap-[3px] pl-px">
      <TaskButton label="Chrome"><Chrome /></TaskButton>
      <TaskButton label="Explorer"><Explorer /></TaskButton>
      <TaskButton label="EMU Client"><Runner className="mt-1 h-7 w-9" /></TaskButton>
      <TaskButton label="Warning" hot><Warning /></TaskButton>
    </div>
    <div className="flex items-center bg-linear-to-r from-[#a6bfdc] to-[#8294ab] to-[30px] pl-[36px] text-[#eef2f7]">
      <Grip />
      <span className="ml-2 text-[12px] leading-4">PL</span>
      <svg viewBox="0 0 18 12" className="ml-2 h-3 w-[18px]" aria-hidden="true">
        <path d="M9 3c0-2 3-1 4-3" stroke="#6d6660" fill="none" />
        <path d="M1 3.500h16v8H1z" fill="#e0d8d0" stroke="#7b746e" />
        <path d="M3 6h12M3 9h12" stroke="#8b837c" strokeDasharray="2 1" />
      </svg>
      <svg viewBox="0 0 10 6" className="ml-[14px] h-[6px] w-[10px]" aria-hidden="true">
        <path d="M5 0 10 6H0z" fill="#f4f6f9" />
      </svg>
      <svg viewBox="0 0 18 18" className="ml-[15px] size-[18px]" aria-hidden="true">
        <path d="M2 1v16" stroke="#eee" strokeWidth="1.500" />
        <path d="M3 2c3-1 5 2 10 1v7c-4 1-6-2-10-1z" fill="#fff" stroke="#667" strokeWidth=".6" />
        <circle cx="12.500" cy="12.500" r="4.800" fill="#d0342c" />
        <path d="m10.500 10.500 4 4m0-4-4 4" stroke="#fff" strokeWidth="1.500" />
      </svg>
      <svg viewBox="0 0 18 18" className="ml-2 size-[18px]" fill="none" aria-hidden="true">
        <path d="M5.500 4.500h12v9h-12z" fill="#4d5b6d" stroke="#f0f3f6" strokeWidth="1.300" />
        <path d="M8 16.500h7M11.500 14v2" stroke="#f0f3f6" strokeWidth="1.500" />
        <path d="M1 1.500h4v4H1zM3 6v8h3" stroke="#f0f3f6" strokeWidth="1.300" />
      </svg>
      <svg viewBox="0 0 18 18" className="ml-2 size-[18px]" fill="none" aria-hidden="true">
        <path d="M1 6h3l5-5v16l-5-5H1z" fill="#fff" stroke="#5d6878" strokeWidth=".6" />
        <path d="M11.500 6.500c1 1.500 1 3.500 0 5M14 4.500c2 3 2 6 0 9" stroke="#f0f3f6" strokeWidth="1.300" />
      </svg>
      <div className="ml-[18px] text-center text-[13px] leading-[19px]">
        <div>17:53</div>
        <div>2018-10-06</div>
      </div>
      <button
        type="button"
        aria-label="Show desktop"
        className="ml-[10px] h-full w-[13px] border border-[#566579] bg-linear-to-b from-[#9fb0c5] via-[#5c6c82] to-[#8fa3bb]"
      />
    </div>
  </footer>
);

/* ---------- app ---------- */

const App = () => (
  <div className="flex min-h-screen flex-col overflow-hidden border-r-4 border-black bg-[#f0f0f0] font-['Liberation_Sans',Arial,sans-serif] text-[11px] text-[#1c1c1c]">
    <header className="shrink-0 font-['Open_Sans','Noto_Sans',sans-serif] text-[13px]">
      <div className="flex h-6 items-center border-t border-[#59626c] bg-linear-to-b from-[#bbcad8] to-[#d7e4ee] px-[2px]">
        <Runner className="mt-1 h-[14px] w-[18px]" />
        <h1 className="ml-[6px] flex-1 text-[12px] text-[#4a555f]">Ecumaster EMU CLASSIC Client</h1>
        <WindowButtons restore />
      </div>
      <nav className="flex h-[22px] items-center gap-[11px] border-b border-[#b5b9c2] bg-linear-to-b from-[#fbfcff] from-20% to-[#dadff0] to-50% pl-[6px] text-[#7c8087]">
        {["Pliki", "Edycja", "Pulpity", "Narzędzia", "Window", "Help"].map((item) => (
          <button key={item} type="button">
            {item}
          </button>
        ))}
      </nav>
      <div className="flex h-[21px] items-center">
        <ToolButton label="Connect"><Flashlight /></ToolButton>
        <ToolButton label="Open project"><Folder /></ToolButton>
        <ToolButton label="Save project"><Floppy /></ToolButton>
        <Separator />
        <ToolButton label="Open desktop"><Folder blue /></ToolButton>
        <ToolButton label="Save desktop"><Floppy blue /></ToolButton>
        <Separator />
        <ToolButton label="Options"><Tools /></ToolButton>
        <Separator />
        <ToolButton label="Help"><Help /></ToolButton>
      </div>
    </header>

    <div className="flex flex-1">
      <aside className="flex w-[157px] shrink-0 flex-col overflow-hidden border border-r-2 border-[#8b8b8b] bg-white">
        <ul className="grid h-[724px] auto-rows-fr pt-[2px]">
          {tree.map((item, i) => (
            <TreeRow key={i} item={item} last={tree[i + 1]?.level === 1} />
          ))}
        </ul>
        <div className="mb-px mt-auto flex h-[17px] bg-[#f0f0f0]">
          <Arrow dir="left" label="Scroll left" />
          <Thumb className="ml-px w-[113px]" />
          <span className="flex-1" />
          <Arrow dir="right" label="Scroll right" />
        </div>
      </aside>
      <main className="flex min-w-0 flex-1 flex-col bg-[#ababab]">
        <TabStrip
          tabs={["logs", "cranking", "triggers", "ignition", "fuel", "idle", "boost", "Extra 1", "Extra 2", "outputs", "test", "LOG"]}
        />
        <GraphWindow />
      </main>
    </div>

    <StatusBar />
    <Taskbar />
  </div>
);

export default App;
